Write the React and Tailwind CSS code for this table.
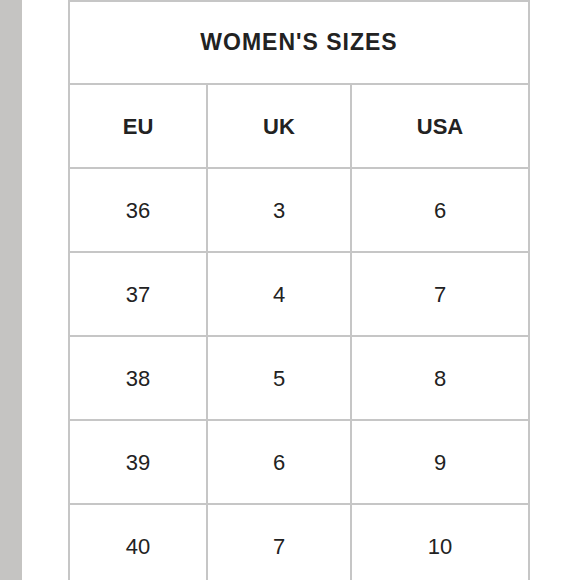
export default function App() {
  const rows = [
    ["36", "3", "6"],
    ["37", "4", "7"],
    ["38", "5", "8"],
    ["39", "6", "9"],
    ["40", "7", "10"],
  ];
  const cell = "flex items-center justify-center border-r-2 border-b-2 border-[#c6c6c6]";
  return (
    <div
      className="w-[580px] h-[580px] overflow-hidden bg-white flex text-[#222222]"
      style={{ fontFamily: '"Liberation Sans", Arial, sans-serif' }}
    >
      <div className="w-[22px] h-full bg-[#c5c4c2] shrink-0" />
      <div className="ml-[46px] shrink-0">
        <div className="w-[462px] border-l-2 border-t-2 border-[#c6c6c6]">
          <div className={`${cell} h-[83px] text-[23px] font-bold tracking-[1px]`}>WOMEN'S SIZES</div>
          <div className="grid grid-cols-[138px_144px_178px]">
            <div className={`${cell} h-[84px] text-[22px] font-bold`}>EU</div>
            <div className={`${cell} h-[84px] text-[22px] font-bold`}>UK</div>
            <div className={`${cell} h-[84px] text-[22px] font-bold`}>USA</div>
            {rows.map((r, i) =>
              r.map((v, j) => (
                <div key={`${i}-${j}`} className={`${cell} h-[84px] text-[22px]`}>
                  {v}
                </div>
              ))
            )}
          </div>
        </div>
      </div>
    </div>
  );
}
